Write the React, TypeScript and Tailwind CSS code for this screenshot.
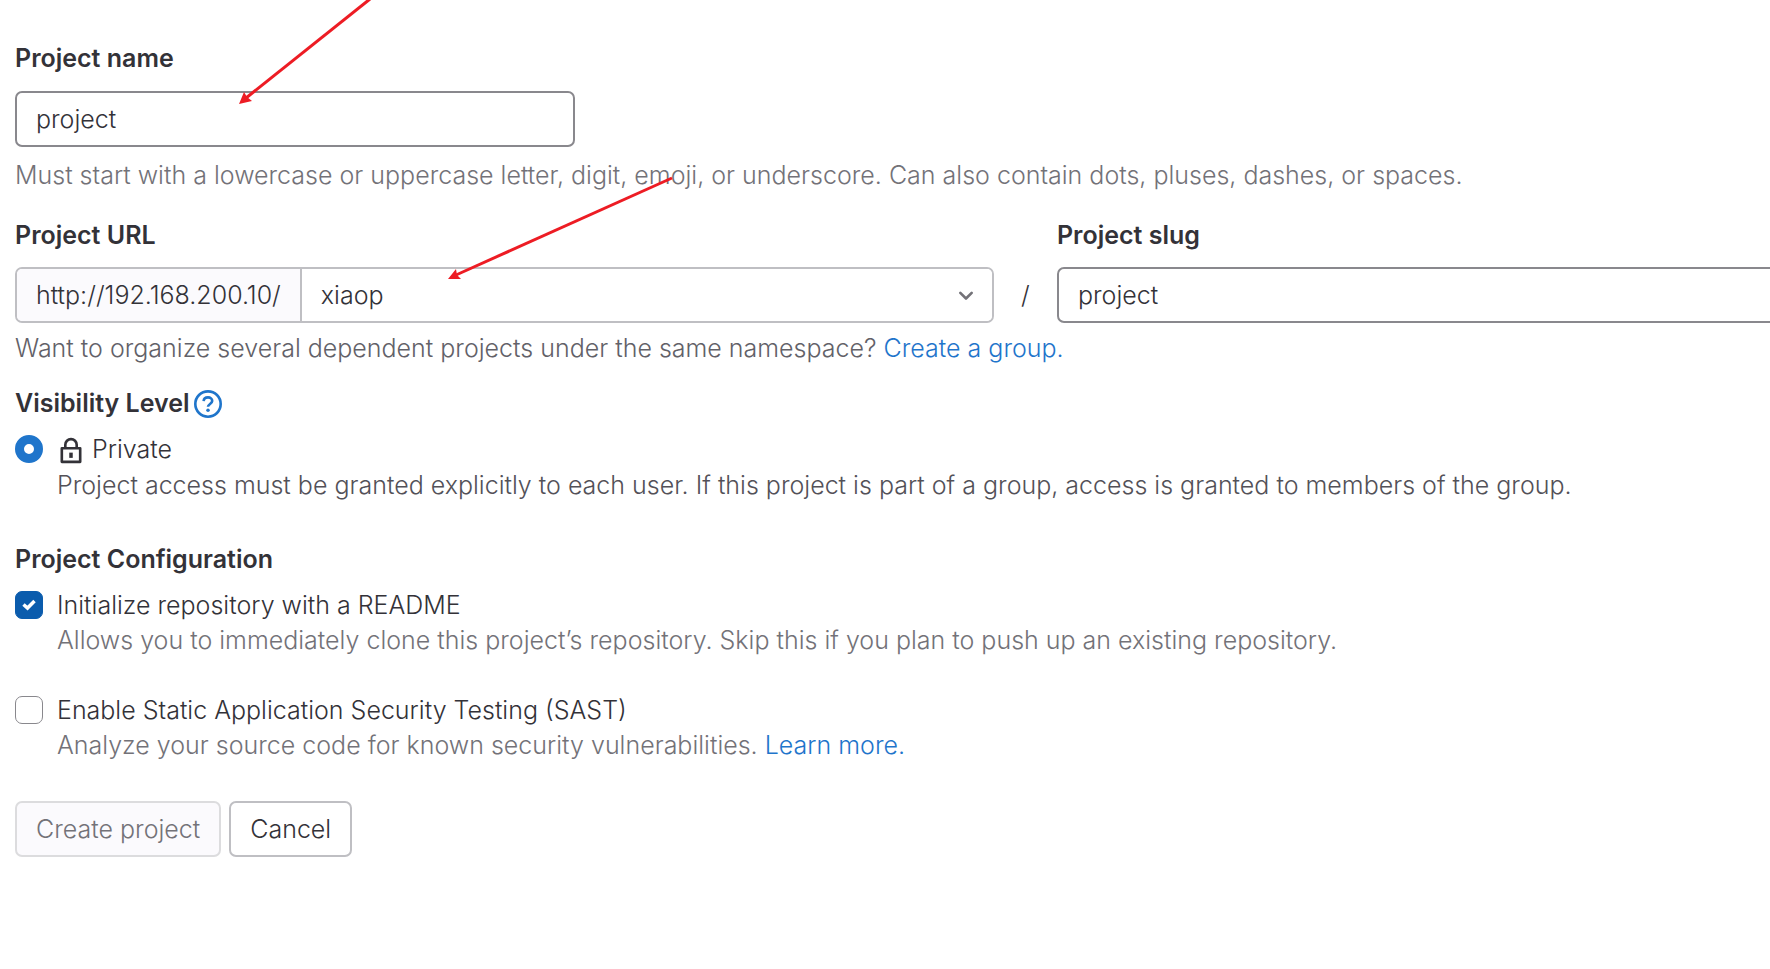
import { useState } from "react";
import type { ReactNode } from "react";

const fieldClass =
  "h-14 w-full rounded-[7px] border-2 border-[#89888d] bg-white px-[19px] text-[#333238] outline-none";

function HelpIcon() {
  return (
    <svg viewBox="0 0 16 16" className="size-7" fill="none" aria-hidden="true">
      <circle cx="8" cy="8" r="7.25" stroke="currentColor" strokeWidth="1.5" />
      <path
        d="M5.5 6.3C5.6 5 6.6 4.2 8 4.2c1.4 0 2.4.9 2.4 2.1 0 1.6-2.4 1.8-2.4 3.3"
        stroke="currentColor"
        strokeWidth="1.5"
      />
      <circle cx="8" cy="11.6" r="1" fill="currentColor" />
    </svg>
  );
}

function LockIcon() {
  return (
    <svg viewBox="0 0 16 16" className="size-7" fill="none" stroke="currentColor" aria-hidden="true">
      <path d="M2.75 7h10.5v7.75H2.75z" strokeWidth="1.5" strokeLinejoin="round" />
      <path d="M4.75 7V5a3.25 3.25 0 0 1 6.5 0v2" strokeWidth="1.5" />
      <path d="M8 9.5v3" strokeWidth="2" />
    </svg>
  );
}

function Arrows() {
  return (
    <svg
      className="pointer-events-none absolute top-0 left-0"
      width="700"
      height="300"
      fill="none"
      stroke="#ed1c24"
      strokeWidth="3"
      aria-hidden="true"
    >
      <path d="M370 -1L246 98" />
      <path d="M239 104L244 92L247 97L252 101Z" fill="#ed1c24" stroke="none" />
      <path d="M672 178L456 275" />
      <path d="M448 279L456 269L457 275L461 279Z" fill="#ed1c24" stroke="none" />
    </svg>
  );
}

type CheckOptionProps = {
  id: string;
  label: string;
  checked: boolean;
  onChange: (checked: boolean) => void;
  children: ReactNode;
};

function CheckOption({ id, label, checked, onChange, children }: CheckOptionProps) {
  return (
    <div className="flex gap-[14px]">
      <span className="relative mt-[3px] size-7 shrink-0">
        <input
          id={id}
          type="checkbox"
          checked={checked}
          onChange={(e) => onChange(e.target.checked)}
          className="block size-7 appearance-none rounded-[7px] border border-[#89888d] bg-white checked:border-[#0b5cad] checked:bg-[#0b5cad]"
        />
        {checked && (
          <svg viewBox="0 0 28 28" className="pointer-events-none absolute inset-0 size-7" fill="none" aria-hidden="true">
            <path d="M8.5 13.5L12.5 17L19.5 10" stroke="white" strokeWidth="3.5" />
          </svg>
        )}
      </span>
      <div>
        <label htmlFor={id} className="block">
          {label}
        </label>
        <p className="text-[#737278]">{children}</p>
      </div>
    </div>
  );
}

export default function App() {
  const [name, setName] = useState("project");
  const [slug, setSlug] = useState("project");
  const [namespace, setNamespace] = useState("xiaop");
  const [readme, setReadme] = useState(true);
  const [sast, setSast] = useState(false);

  return (
    <div className="relative min-h-screen overflow-hidden bg-white font-['Inter',sans-serif] text-[25px] leading-[35px] font-[360] text-[#333238]">
      <form className="pt-[41px] pb-28 pl-[15px]" onSubmit={(e) => e.preventDefault()}>
        <label htmlFor="project-name" className="mb-[15px] block font-semibold">
          Project name
        </label>
        <input
          id="project-name"
          type="text"
          value={name}
          onChange={(e) => setName(e.target.value)}
          className={`${fieldClass} block max-w-[560px]`}
        />
        <p className="mt-[11px] text-[#737278]">
          Must start with a lowercase or uppercase letter, digit, emoji, or underscore. Can also contain dots, pluses,
          dashes, or spaces.
        </p>

        <div className="mt-[25px] -mr-4 grid grid-cols-[47fr_63px_35fr] items-end">
          <div>
            <label htmlFor="project-namespace" className="mb-[14px] block font-semibold">
              Project URL
            </label>
            <div className="flex h-14 rounded-[7px] border-2 border-[#bfbfc3]">
              <span className="flex items-center rounded-l-[5px] border-r-2 border-[#bfbfc3] bg-[#fbfafd] px-[19px]">
                http://192.168.200.10/
              </span>
              <div className="relative flex-1">
                <select
                  id="project-namespace"
                  value={namespace}
                  onChange={(e) => setNamespace(e.target.value)}
                  className="h-full w-full appearance-none rounded-r-[5px] bg-white px-[19px] outline-none"
                >
                  <option value="xiaop">xiaop</option>
                </select>
                <svg
                  viewBox="0 0 16 16"
                  className="pointer-events-none absolute top-3 right-3 size-7 text-[#737278]"
                  fill="none"
                  aria-hidden="true"
                >
                  <path
                    d="M4.75 6.75L8 10l3.25-3.25"
                    stroke="currentColor"
                    strokeWidth="1.5"
                    strokeLinecap="round"
                    strokeLinejoin="round"
                  />
                </svg>
              </div>
            </div>
          </div>
          <span className="flex h-14 items-center justify-center">/</span>
          <div>
            <label htmlFor="project-slug" className="mb-[14px] block font-semibold">
              Project slug
            </label>
            <input
              id="project-slug"
              type="text"
              value={slug}
              onChange={(e) => setSlug(e.target.value)}
              className={`${fieldClass} block`}
            />
          </div>
        </div>
        <p className="mt-2 text-[#626168]">
          Want to organize several dependent projects under the same namespace?{" "}
          <a href="#group" className="text-[#1f75cb]">
            Create a group.
          </a>
        </p>

        <fieldset className="mt-5">
          <legend className="flex items-center gap-1 font-semibold">
            Visibility Level
            <a href="#visibility" aria-label="Help" className="text-[#1f75cb]">
              <HelpIcon />
            </a>
          </legend>
          <div className="mt-[11px] flex gap-[14px]">
            <input
              id="visibility-private"
              type="radio"
              name="visibility"
              defaultChecked
              className="mt-[3px] size-7 shrink-0 appearance-none rounded-full border border-[#89888d] bg-white checked:border-[9px] checked:border-[#1f75cb]"
            />
            <div>
              <label htmlFor="visibility-private" className="flex items-center gap-[7px]">
                <LockIcon />
                Private
              </label>
              <p className="mt-px text-[#535158]">
                Project access must be granted explicitly to each user. If this project is part of a group, access is
                granted to members of the group.
              </p>
            </div>
          </div>
        </fieldset>

        <fieldset className="mt-[39px]">
          <legend className="font-semibold">Project Configuration</legend>
          <div className="mt-[11px] flex flex-col gap-[35px]">
            <CheckOption
              id="init-readme"
              label="Initialize repository with a README"
              checked={readme}
              onChange={setReadme}
            >
              Allows you to immediately clone this project’s repository. Skip this if you plan to push up an existing
              repository.
            </CheckOption>
            <CheckOption
              id="enable-sast"
              label="Enable Static Application Security Testing (SAST)"
              checked={sast}
              onChange={setSast}
            >
              Analyze your source code for known security vulnerabilities.{" "}
              <a href="#sast" className="text-[#1f75cb]">
                Learn more.
              </a>
            </CheckOption>
          </div>
        </fieldset>

        <div className="mt-[38px] flex gap-2">
          <button
            type="submit"
            disabled
            className="h-14 rounded-[7px] border-2 border-[#dcdcde] bg-[#fbfafd] px-[19px] text-[#737278]"
          >
            Create project
          </button>
          <button type="button" className="h-14 rounded-[7px] border-2 border-[#bfbfc3] bg-white px-[19px]">
            Cancel
          </button>
        </div>
      </form>
      <Arrows />
    </div>
  );
}
